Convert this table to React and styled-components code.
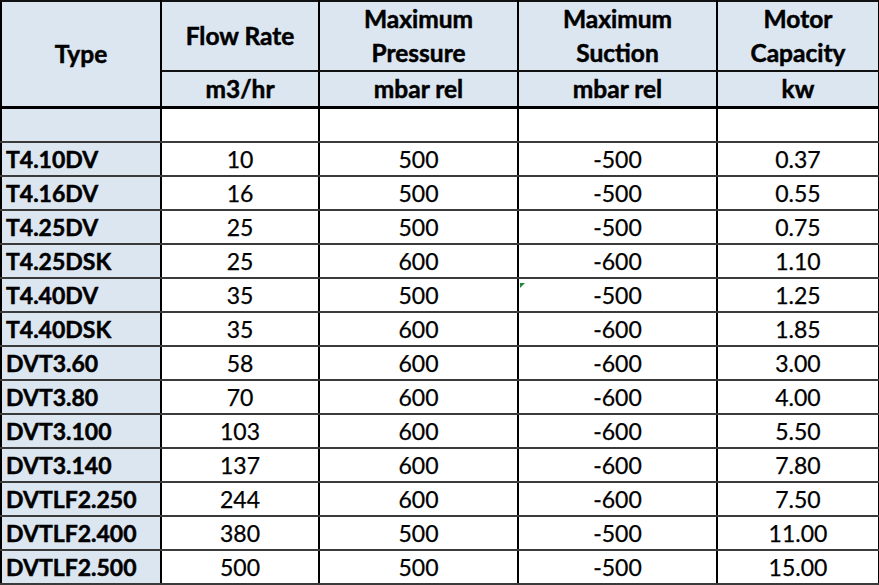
import React from "react";
import styled, { createGlobalStyle } from "styled-components";

const GlobalStyle = createGlobalStyle`
  html, body {
    margin: 0;
    padding: 0;
    background: #ffffff;
  }
  body {
    font-family: Lato, "Open Sans", "Liberation Sans", sans-serif;
    color: #000;
  }
`;

const rows = [
  ["T4.10DV", "10", "500", "-500", "0.37"],
  ["T4.16DV", "16", "500", "-500", "0.55"],
  ["T4.25DV", "25", "500", "-500", "0.75"],
  ["T4.25DSK", "25", "600", "-600", "1.10"],
  ["T4.40DV", "35", "500", "-500", "1.25"],
  ["T4.40DSK", "35", "600", "-600", "1.85"],
  ["DVT3.60", "58", "600", "-600", "3.00"],
  ["DVT3.80", "70", "600", "-600", "4.00"],
  ["DVT3.100", "103", "600", "-600", "5.50"],
  ["DVT3.140", "137", "600", "-600", "7.80"],
  ["DVTLF2.250", "244", "600", "-600", "7.50"],
  ["DVTLF2.400", "380", "500", "-500", "11.00"],
  ["DVTLF2.500", "500", "500", "-500", "15.00"],
];

const App = () => {
  return (
    <>
      <GlobalStyle />
      <Page>
        <SpecTable>
          <colgroup>
            <col style={{ width: 160 }} />
            <col style={{ width: 158 }} />
            <col style={{ width: 199 }} />
            <col style={{ width: 199 }} />
            <col style={{ width: 162 }} />
          </colgroup>
          <thead>
            <TitleRow>
              <HeadCell rowSpan={2} $last>
                Type
              </HeadCell>
              <HeadCell>Flow Rate</HeadCell>
              <HeadCell>
                Maximum
                <br />
                Pressure
              </HeadCell>
              <HeadCell>
                Maximum
                <br />
                Suction
              </HeadCell>
              <HeadCell>
                Motor
                <br />
                Capacity
              </HeadCell>
            </TitleRow>
            <UnitRow>
              <HeadCell $last>m3/hr</HeadCell>
              <HeadCell $last>mbar rel</HeadCell>
              <HeadCell $last>mbar rel</HeadCell>
              <HeadCell $last>kw</HeadCell>
            </UnitRow>
          </thead>
          <tbody>
            <DataRow>
              <TypeCell />
              <ValueCell />
              <ValueCell />
              <ValueCell />
              <ValueCell />
            </DataRow>
            {rows.map((r) => (
              <DataRow key={r[0]}>
                <TypeCell>{r[0]}</TypeCell>
                <ValueCell>{r[1]}</ValueCell>
                <ValueCell>{r[2]}</ValueCell>
                <ValueCell $flag={r[0] === "T4.40DV"}>{r[3]}</ValueCell>
                <ValueCell>{r[4]}</ValueCell>
              </DataRow>
            ))}
          </tbody>
        </SpecTable>
      </Page>
    </>
  );
};

const Page = styled.div`
  width: 879px;
  height: 585px;
  background: #fff;
`;

const SpecTable = styled.table`
  width: 878px;
  table-layout: fixed;
  border-collapse: collapse;
  border: 2px solid #000;
  font-size: 23px;
`;

const TitleRow = styled.tr`
  height: 69px;
`;

const UnitRow = styled.tr`
  height: 36px;
`;

const DataRow = styled.tr`
  height: 34px;
`;

const HeadCell = styled.th`
  background: #dce6f1;
  font-size: 24.5px;
  font-weight: 700;
  -webkit-text-stroke: 0.5px #000;
  text-align: center;
  vertical-align: middle;
  line-height: 34px;
  padding: 0;
  border-left: 2px solid #000;
  border-right: 2px solid #000;
  border-top: 2px solid #111;
  border-bottom: ${(p) => (p.$last ? "3px solid #000" : "2px solid #111")};
`;

const TypeCell = styled.td`
  background: #dce6f1;
  font-weight: 700;
  -webkit-text-stroke: 0.5px #000;
  text-align: left;
  padding: 0 0 0 4px;
  line-height: 30px;
  border-left: 2px solid #000;
  border-right: 2px solid #000;
  border-bottom: 2px solid #3a3a3a;
`;

const ValueCell = styled.td`
  position: relative;
  font-weight: 400;
  -webkit-text-stroke: 0.25px #000;
  text-align: center;
  padding: 0;
  line-height: 30px;
  border-left: 2px solid #000;
  border-right: 2px solid #000;
  border-bottom: 2px solid #3a3a3a;

  &::before {
    content: "";
    display: ${(p) => (p.$flag ? "block" : "none")};
    position: absolute;
    left: 1px;
    top: 4px;
    width: 0;
    height: 0;
    border-top: 5px solid #1e8a3a;
    border-right: 5px solid transparent;
  }
`;

export default App;
